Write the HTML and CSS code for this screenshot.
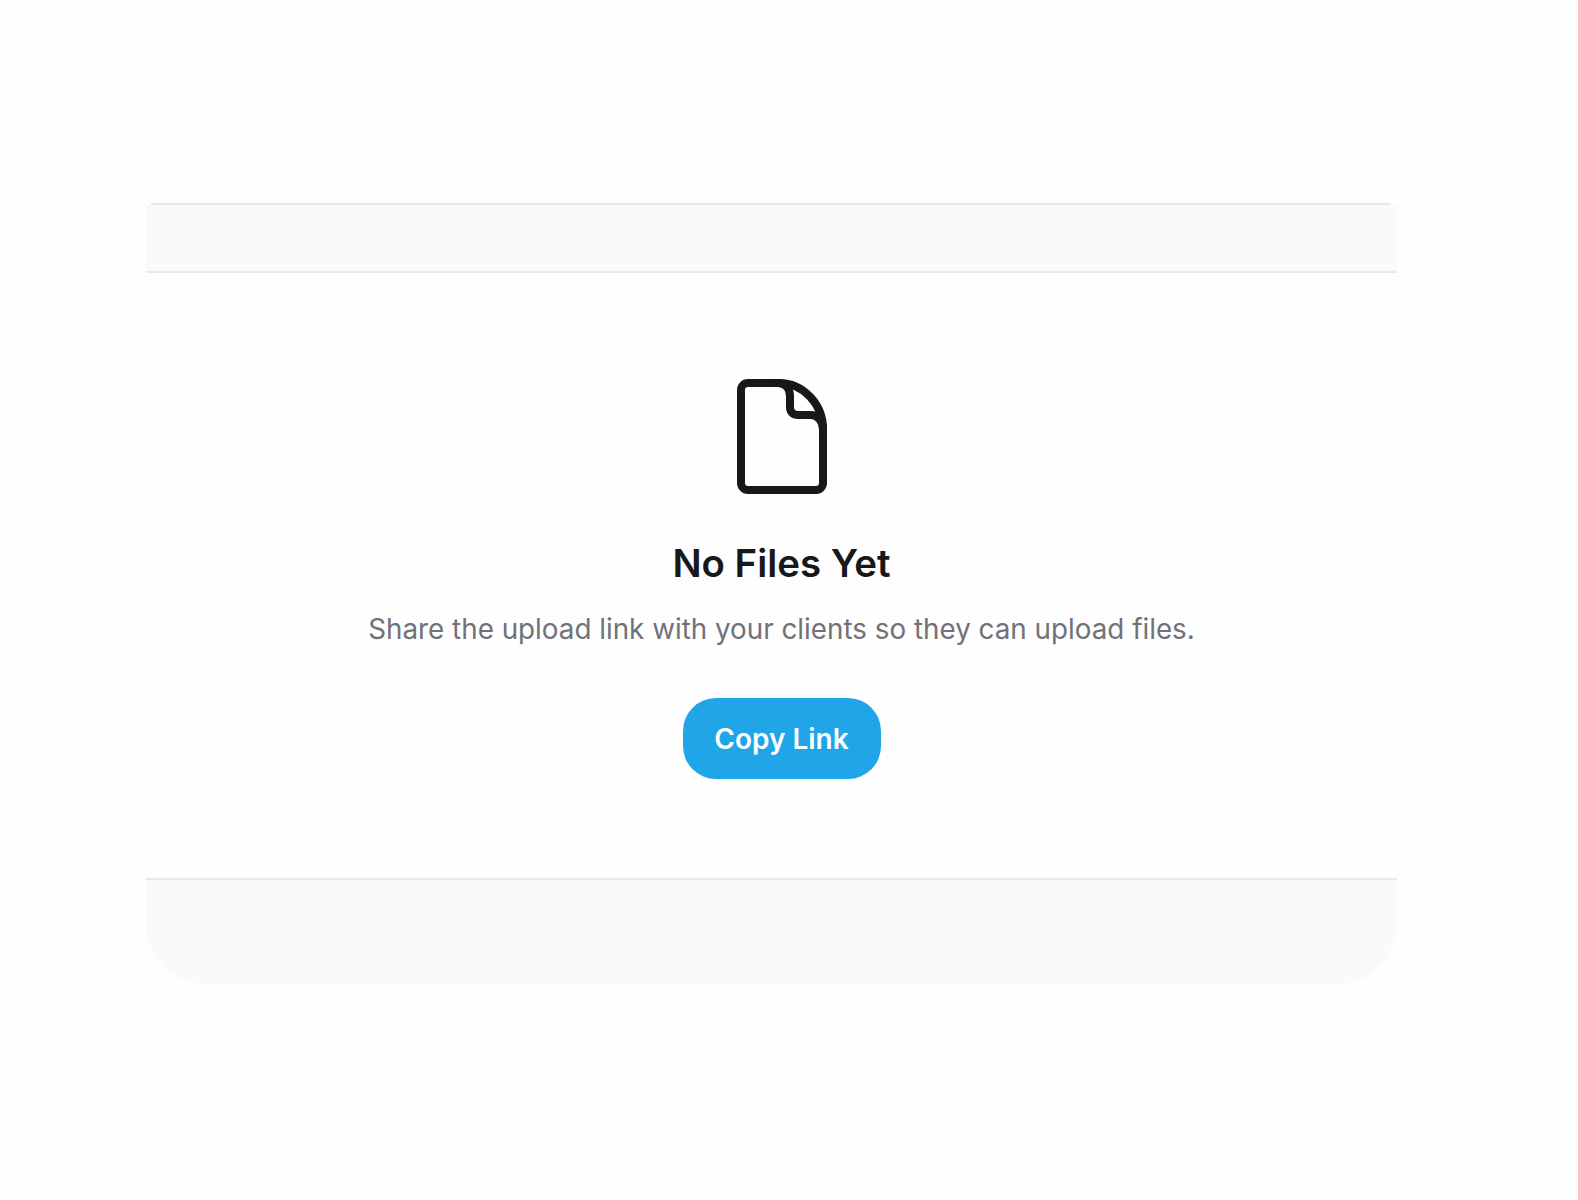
FILE: index.html
```html
<html>
    <head>
        <title>No Files Yet</title>
        <link rel="stylesheet" href="styles.css">
    </head>
    <body>
        <div class="card">
            <div class="top_line"></div>
            <div class="card_header"></div>
            <div class="empty">
                <svg class="file_icon" viewBox="0 0 90 115" width="90" height="115">
                    <path d="M11 4H42C66 4 86 25 86 50V104a7 7 0 0 1-7 7H11a7 7 0 0 1-7-7V11a7 7 0 0 1 7-7Z"/>
                    <path d="M42 4C49 5 53 10 53 17V28C53 33 56 36 61 36H74C81 36 86 43 86 50"/>
                </svg>
                <h1>No Files Yet</h1>
                <p>Share the upload link with your clients so they can upload files.</p>
                <button>Copy Link</button>
            </div>
            <div class="card_footer"></div>
        </div>
    </body>
</html>
```

FILE: styles.css
```css
body {
    margin: 0;
    padding: 203px 181px 0 146px;
    background: #fefefe;
    font-family: Inter, "Liberation Sans", sans-serif;
}

.top_line {
    margin: 0 6px 0 5px;
    height: 2px;
    background: #e9e9e9;
}

.card_header {
    height: 66px;
    background: #fafafa;
    border-bottom: 2px solid #e9e9e9;
}

.empty {
    display: flex;
    flex-direction: column;
    align-items: center;
    height: 605px;
    padding: 106px 0 0 20px;
    box-sizing: border-box;
}

.file_icon {
    fill: none;
    stroke: #18181b;
    stroke-width: 8;
    stroke-linejoin: round;
    stroke-linecap: round;
}

h1 {
    margin: 47px 0 0 0;
    font-size: 38.4px;
    line-height: 44px;
    font-weight: 600;
    color: #18181b;
}

p {
    margin: 23px 0 0 0;
    font-size: 27.8px;
    line-height: 42px;
    color: #71717a;
}

button {
    margin-top: 48px;
    width: 198px;
    height: 81px;
    padding: 0;
    border: none;
    border-radius: 33px;
    background: #1fa5e8;
    color: white;
    font-family: inherit;
    font-size: 28px;
    font-weight: 600;
}

.card_footer {
    height: 104px;
    background: #fafafa;
    border-top: 2px solid #e9e9e9;
    border-radius: 0 0 60px 60px;
}
```
